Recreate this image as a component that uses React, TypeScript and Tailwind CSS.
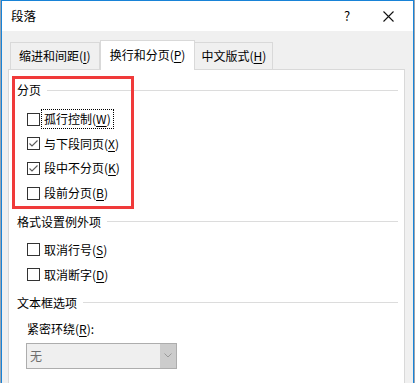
import React from "react";

const font = { fontFamily: '"Noto Sans CJK SC", "Noto Sans", sans-serif' };

function Key({ label, k, tail = "" }: { label: string; k: string; tail?: string }) {
  return (
    <span>
      {label}(<span className="underline underline-offset-2">{k}</span>){tail}
    </span>
  );
}

function GroupHeader({ title, className = "" }: { title: string; className?: string }) {
  return (
    <div className={`flex items-center h-[16px] ${className}`}>
      <span className="leading-none">{title}</span>
      <div className="flex-1 h-px bg-[#dcdcdc] ml-[6px]" />
    </div>
  );
}

function CheckRow({
  label,
  k,
  checked = false,
  focused = false,
}: {
  label: string;
  k: string;
  checked?: boolean;
  focused?: boolean;
}) {
  return (
    <div className="flex items-center h-[24.6px] pl-[10px]">
      <div className="w-[13px] h-[13px] border border-[#333333] bg-white flex items-center justify-center shrink-0">
        {checked && (
          <svg width="11" height="11" viewBox="0 0 11 11">
            <path d="M1.5 5.5 L4 8 L9.5 2.5" fill="none" stroke="#5a5a5a" strokeWidth="1.1" />
          </svg>
        )}
      </div>
      <div
        className={`ml-[2px] px-[2px] h-[18px] flex items-center leading-none ${
          focused ? "outline outline-1 outline-dotted outline-black" : ""
        }`}
      >
        <Key label={label} k={k} />
      </div>
    </div>
  );
}

export default function App() {
  return (
    <div className="w-[415px] h-[383px] overflow-hidden bg-[#9aa4b0] flex text-[12px] text-black" style={font}>
      <div className="ml-[1px] w-[413px] h-[400px] border border-[#1883d7] bg-[#f0f0f0] flex flex-col">
        {/* title bar */}
        <div className="h-[30px] bg-white flex items-center shrink-0">
          <span className="ml-[9px] text-[12.5px]">段落</span>
          <span className="ml-auto text-[13px] w-[20px] text-center mr-[26px]">?</span>
          <svg width="11" height="11" viewBox="0 0 11 11" className="mr-[19px]">
            <path d="M0.5 0.5 L10.5 10.5 M10.5 0.5 L0.5 10.5" stroke="#111" strokeWidth="1.1" />
          </svg>
        </div>

        {/* tabs */}
        <div className="flex items-end h-[38px] pl-[8px] shrink-0">
          <div className="h-[27px] px-[8px] border border-b-0 border-[#d9d9d9] bg-[#f0f0f0] flex items-center leading-none">
            <Key label="缩进和间距" k="I" />
          </div>
          <div className="h-[30px] px-[9px] border border-b-0 border-[#d9d9d9] bg-white flex items-center leading-none -mb-px relative z-10 pb-[2px]">
            <Key label="换行和分页" k="P" />
          </div>
          <div className="h-[27px] px-[6px] border border-b-0 border-l-0 border-[#d9d9d9] bg-[#f0f0f0] flex items-center leading-none">
            <Key label="中文版式" k="H" />
          </div>
        </div>

        {/* panel */}
        <div className="ml-[6px] mr-[8px] flex-1 border border-[#d9d9d9] bg-white relative pl-[8px] pr-[6px] pt-[12px]">
          <GroupHeader title="分页" />
          <div className="mt-[9px]">
            <CheckRow label="孤行控制" k="W" focused />
            <CheckRow label="与下段同页" k="X" checked />
            <CheckRow label="段中不分页" k="K" checked />
            <CheckRow label="段前分页" k="B" />
          </div>

          <GroupHeader title="格式设置例外项" className="mt-[8.6px]" />
          <div className="mt-[7.7px]">
            <CheckRow label="取消行号" k="S" />
            <CheckRow label="取消断字" k="D" />
          </div>

          <GroupHeader title="文本框选项" className="mt-[8px]" />
          <div className="mt-[10px] h-[16px] pl-[10px] flex items-center leading-none">
            <Key label="紧密环绕" k="R" tail=":" />
          </div>
          <div className="mt-[6px] ml-[9px] w-[151px] h-[26px] border border-[#adadad] bg-[#efefef] flex">
            <div className="flex-1 flex items-center pl-[3px] text-[#6d6d6d] leading-none">无</div>
            <div className="w-[16px] bg-[#cccccc] flex items-center justify-center">
              <svg width="8" height="5" viewBox="0 0 8 5">
                <path d="M0.5 0.5 L4 4 L7.5 0.5" fill="none" stroke="#9a9a9a" strokeWidth="1" />
              </svg>
            </div>
          </div>

          {/* red annotation box */}
          <div className="absolute left-[3px] top-[6px] w-[122px] h-[133px] border-[3px] border-[#f03a3a] pointer-events-none" />
        </div>
      </div>
    </div>
  );
}
